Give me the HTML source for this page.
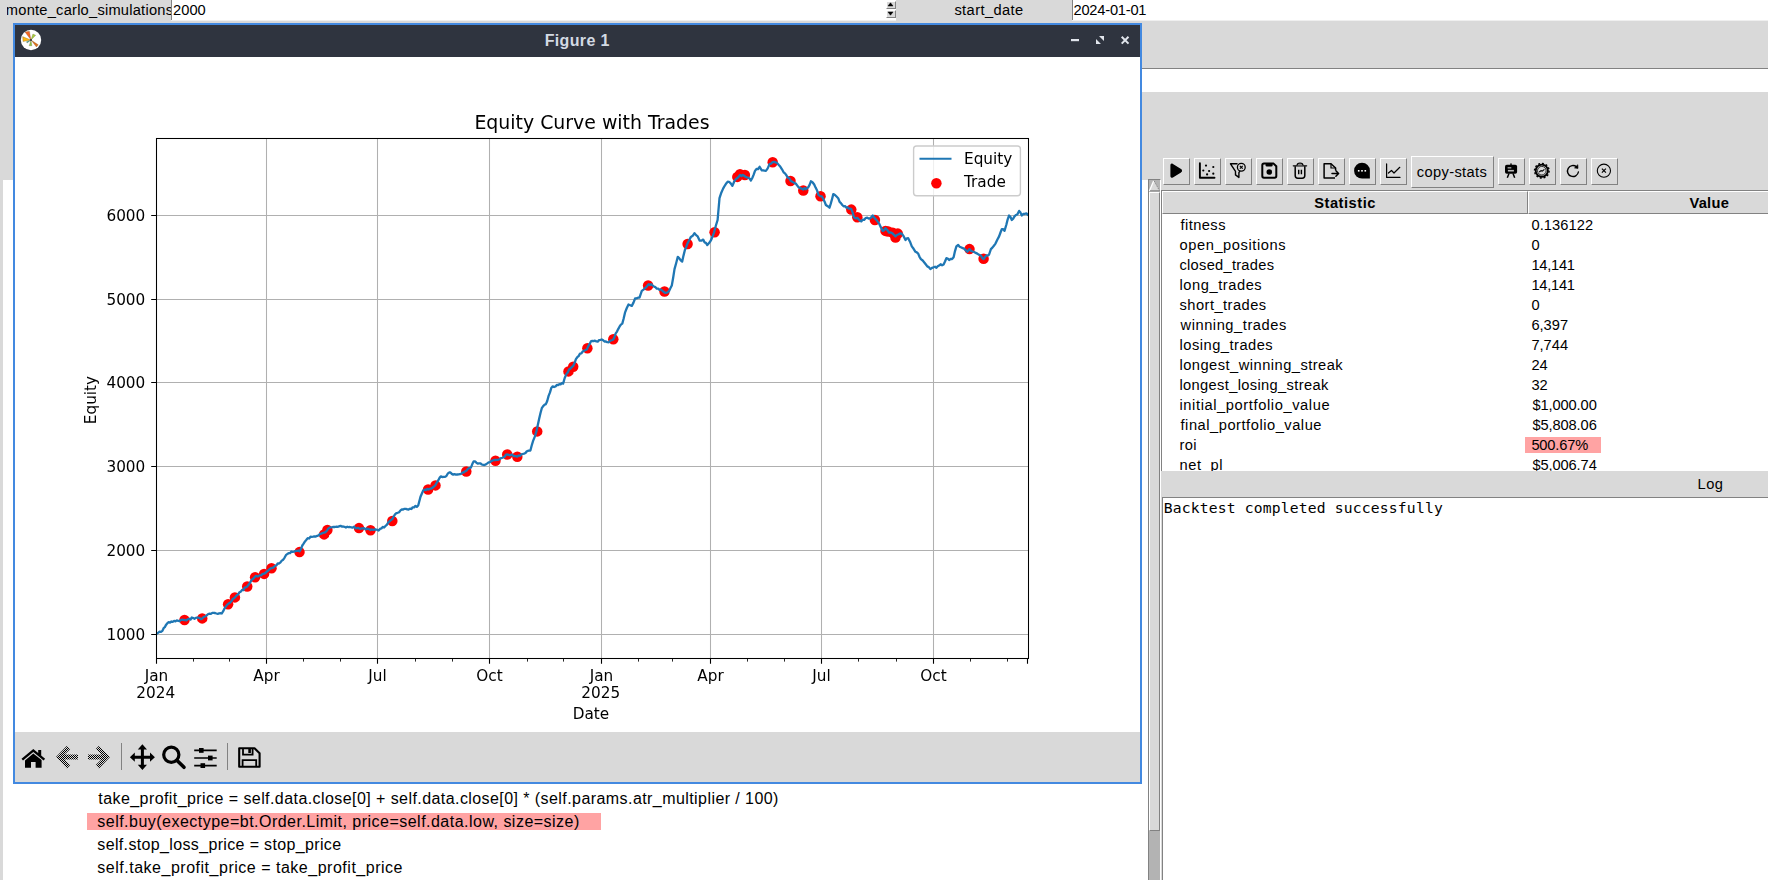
<!DOCTYPE html>
<html><head><meta charset="utf-8"><title>Figure 1</title><style>
*{box-sizing:border-box;margin:0;padding:0}
html,body{width:1768px;height:880px;overflow:hidden;background:#d9d9d9}
body{position:relative;font-family:"Liberation Sans",sans-serif;font-size:13.33px;color:#000}
.a{position:absolute}
.t{position:absolute;white-space:pre;line-height:1}
.ui,.num,.uib{font-family:"Liberation Sans",sans-serif;font-size:14.67px}
.uib{font-weight:bold}
.code{font-family:"Liberation Sans",sans-serif;font-size:16px}
.figt{font-family:"Liberation Sans",sans-serif;font-size:16px;font-weight:bold}
.mono{font-family:"DejaVu Sans Mono",monospace;font-size:14.67px}
.btn{position:absolute;background:#d9d9d9;border:1px solid;border-color:#fff #828282 #828282 #fff;width:27px;height:27px}
.row{position:absolute;left:1180px}
.val{position:absolute;left:1532px}
svg{position:absolute;overflow:visible}
svg text{font-family:"DejaVu Sans",sans-serif}
</style></head><body>
<div class="a" style="left:171px;top:0;width:725px;height:20px;background:#fff;border-left:1px solid #828282"></div>
<div class="a" style="left:171px;top:20px;width:725px;height:1px;background:#efefef"></div>
<div class="a" style="left:7px;top:0;width:164px;height:20px;overflow:hidden"><div class="t ui" style="left:-1.2px;top:2.5px;letter-spacing:0.23px">monte_carlo_simulations:</div></div>
<div class="t num" style="left:173.10px;top:2.60px;letter-spacing:0.0px;">2000</div>
<div class="a" style="left:886px;top:1px;width:10px;height:8px;background:#d9d9d9;border:1px solid;border-color:#fff #828282 #828282 #fff"></div>
<div class="a" style="left:886px;top:10px;width:10px;height:8px;background:#d9d9d9;border:1px solid;border-color:#fff #828282 #828282 #fff"></div>
<svg style="left:886px;top:0" width="10" height="20"><path d="M4.5 2.8 L7 6 L2 6Z M2 12 L7 12 L4.5 15.2Z" fill="#000" stroke="#000" stroke-width="0.5" stroke-linejoin="round"/></svg>
<div class="t ui" style="left:954.40px;top:2.50px;letter-spacing:0.4px;">start_date</div>
<div class="a" style="left:1072px;top:0;width:696px;height:20px;background:#fff;border-left:1px solid #828282"></div>
<div class="a" style="left:1072px;top:20px;width:696px;height:1px;background:#efefef"></div>
<div class="t num" style="left:1073.50px;top:2.50px;letter-spacing:-0.222px;">2024-01-01</div>
<div class="a" style="left:1142px;top:68px;width:626px;height:1px;background:#828282"></div>
<div class="a" style="left:1142px;top:69px;width:626px;height:23px;background:#fff"></div>
<div class="a" style="left:3px;top:180px;width:1145px;height:700px;background:#fff"></div>
<div class="a" style="left:87px;top:813px;width:514px;height:17px;background:#ffa3a3"></div>
<div class="t code" style="left:98.30px;top:790.50px;letter-spacing:0.428px;">take_profit_price = self.data.close[0] + self.data.close[0] * (self.params.atr_multiplier / 100)</div>
<div class="t code" style="left:97.30px;top:813.70px;letter-spacing:0.479px;">self.buy(exectype=bt.Order.Limit, price=self.data.low, size=size)</div>
<div class="t code" style="left:97.30px;top:836.70px;letter-spacing:0.351px;">self.stop_loss_price = stop_price</div>
<div class="t code" style="left:97.30px;top:859.50px;letter-spacing:0.513px;">self.take_profit_price = take_profit_price</div>
<div class="t code" style="left:97.30px;top:766.30px;letter-spacing:0.42px;">stop_price = self.data.close[0] - self.data.close[0] * (self.params.atr_multiplier / 100)</div>
<div class="a" style="left:1148px;top:179px;width:13px;height:701px;background:#b3b3b3;border-left:1px solid #828282;border-right:1px solid #fff;border-top:1px solid #828282"></div>
<div class="a" style="left:1149px;top:192px;width:11px;height:639px;background:#d9d9d9;border:1px solid;border-color:#fff #828282 #828282 #fff"></div>
<svg style="left:1149px;top:180px" width="11" height="12"><path d="M4.8 0.8 L10.6 10.8 L0.3 10.8Z" fill="#d9d9d9"/><path d="M4.6 1 L0.4 11" stroke="#fff" stroke-width="1.3"/><path d="M5.2 1 L10.4 10.6" stroke="#828282" stroke-width="1" stroke-dasharray="1 1"/><path d="M1 10.8 H10.8" stroke="#828282" stroke-width="1"/></svg>
<div class="btn" id="rb0" style="left:1163px;top:158px"></div>
<div class="btn" id="rb1" style="left:1194px;top:158px"></div>
<div class="btn" id="rb2" style="left:1225px;top:158px"></div>
<div class="btn" id="rb3" style="left:1256px;top:158px"></div>
<div class="btn" id="rb4" style="left:1287px;top:158px"></div>
<div class="btn" id="rb5" style="left:1318px;top:158px"></div>
<div class="btn" id="rb6" style="left:1349px;top:158px"></div>
<div class="btn" id="rb7" style="left:1380px;top:158px"></div>
<div class="btn" style="left:1411px;top:156px;width:83px;height:32px"></div>
<div class="t ui" style="left:1416.70px;top:165.00px;letter-spacing:0.378px;">copy-stats</div>
<div class="btn" id="rb8" style="left:1498px;top:158px"></div>
<div class="btn" id="rb9" style="left:1529px;top:158px"></div>
<div class="btn" id="rb10" style="left:1560px;top:158px"></div>
<div class="btn" id="rb11" style="left:1591px;top:158px"></div>
<svg style="left:0;top:0" width="1768" height="200" viewBox="0 0 1768 200">
<g transform="translate(1163,158)"><path d="M8.2 7.4 Q8.2 6 9.5 6.6 L17.6 11.6 Q18.9 12.7 17.6 13.7 L9.5 18.7 Q8.2 19.3 8.2 17.9Z" fill="#000" stroke="#000" stroke-width="1.6" stroke-linejoin="round"/></g>
<g transform="translate(1194,158)"><path d="M5.9 5.2 V19.8 H20.5" fill="none" stroke="#000" stroke-width="1.9" stroke-linecap="round" stroke-linejoin="round"/><g fill="#000"><circle cx="12" cy="7.6" r="1.1"/><circle cx="19.3" cy="9" r="1.1"/><circle cx="9.3" cy="12.5" r="1.1"/><circle cx="15.1" cy="13" r="1.1"/><circle cx="13.1" cy="16.4" r="1.1"/><circle cx="19.3" cy="15.7" r="1.1"/></g></g>
<g transform="translate(1225,158)"><path d="M12 5.8 H5.5 L10.5 13.3 V16.9 L13.9 19.4 V14.6 L14.7 13.3" fill="none" stroke="#000" stroke-width="1.4" stroke-linejoin="round" stroke-linecap="round"/><circle cx="16.3" cy="9.2" r="3.9" fill="none" stroke="#000" stroke-width="1.3"/><path d="M14.9 7.8 L17.7 10.6 M17.7 7.8 L14.9 10.6" stroke="#000" stroke-width="1.2"/></g>
<g transform="translate(1256,158)"><path d="M8 5.6 H17.6 L20.3 8.3 V18 Q20.3 19.7 18.6 19.7 H8 Q6.3 19.7 6.3 18 V7.3 Q6.3 5.6 8 5.6Z" fill="none" stroke="#000" stroke-width="2" stroke-linejoin="round"/><path d="M9.6 5 H16.6 V7.2 Q16.6 8.4 15.4 8.4 H10.8 Q9.6 8.4 9.6 7.2Z" fill="#000"/><circle cx="13.3" cy="14" r="2.8" fill="#000"/></g>
<g transform="translate(1287,158)"><path d="M6.3 7.8 H19.6" stroke="#000" stroke-width="1.3" stroke-linecap="round"/><path d="M10 7.6 Q10 5 13 5 Q16 5 16 7.6" fill="#888" stroke="#000" stroke-width="1.2"/><path d="M8.2 8.2 V17.5 Q8.2 20.2 10.8 20.2 H15.2 Q17.8 20.2 17.8 17.5 V8.2" fill="none" stroke="#000" stroke-width="1.5"/><path d="M11.7 11.8 V16.3 M14.4 11.8 V16.3" stroke="#000" stroke-width="1.4"/></g>
<g transform="translate(1318,158)"><path d="M17 20 H6.1 V5.7 H13 L17.6 10 V12.3" fill="none" stroke="#000" stroke-width="1.5" stroke-linejoin="round"/><path d="M13 5.7 V10 H17.6" fill="none" stroke="#000" stroke-width="1.2"/><path d="M14 15.5 H20.4 M17.9 12.8 L20.6 15.5 L17.9 18.2" fill="none" stroke="#000" stroke-width="1.5" stroke-linecap="round" stroke-linejoin="round"/></g>
<g transform="translate(1349,158)"><path d="M13 4.8 A7.9 7.9 0 1 0 13 20.6 H20.9 V12.7 A7.9 7.9 0 0 0 13 4.8Z" fill="#000"/><g fill="#fff"><rect x="8.9" y="12" width="1.6" height="1.6"/><rect x="12.2" y="12" width="1.6" height="1.6"/><rect x="15.5" y="12" width="1.6" height="1.6"/></g></g>
<g transform="translate(1380,158)"><path d="M6.6 5.9 V19.4 H20" fill="none" stroke="#000" stroke-width="1.2" stroke-linecap="round" stroke-linejoin="round"/><path d="M8.4 15 L11.5 12.5 L14 15 L19.8 9.3" fill="none" stroke="#000" stroke-width="1.2" stroke-linecap="round" stroke-linejoin="round"/></g>
<g transform="translate(1498,158)"><rect x="7" y="6.8" width="12.1" height="9" rx="1.8" fill="#000"/><rect x="12.3" y="5.4" width="1.4" height="2" fill="#000"/><path d="M11 15.5 L9.3 19.8 M15 15.5 L16.7 19.8" stroke="#000" stroke-width="1.5"/><rect x="9.6" y="9.3" width="3.7" height="1.1" fill="#ccc"/><rect x="9.9" y="11.9" width="6" height="1.6" fill="#bbb"/></g>
<g transform="translate(1529,158)"><circle cx="12.8" cy="12.7" r="7.3" fill="none" stroke="#000" stroke-width="1.4" stroke-dasharray="1.9 1.922"/><circle cx="12.8" cy="12.7" r="6.1" fill="none" stroke="#000" stroke-width="1.9"/><circle cx="12.8" cy="12.7" r="4.3" fill="none" stroke="#000" stroke-width="0.8"/><path d="M10.2 14 L12.1 12.6 L13.3 13.1 L15.4 11.4" fill="none" stroke="#000" stroke-width="1.2"/></g>
<g transform="translate(1560,158)"><path d="M18.4 14 A5.5 5.5 0 1 1 16.5 8.8" fill="none" stroke="#000" stroke-width="1.4" stroke-linecap="round"/><path d="M18 10.4 L17.8 6.7 L14.5 9.9Z" fill="#000" stroke="#000" stroke-width="0.6" stroke-linejoin="round"/></g>
<g transform="translate(1591,158)"><circle cx="12.9" cy="12.7" r="6.6" fill="none" stroke="#000" stroke-width="1.1"/><path d="M10.9 10.7 L14.9 14.7 M14.9 10.7 L10.9 14.7" stroke="#000" stroke-width="1.2"/></g>
</svg>
<div class="a" style="left:1161px;top:190px;width:607px;height:281px;background:#fff;border-left:1px solid #828282;border-top:1px solid #828282"></div>
<div class="a" style="left:1162px;top:191px;width:366px;height:23px;background:#d9d9d9;border:1px solid;border-color:#fff #828282 #828282 #fff"></div>
<div class="a" style="left:1528px;top:191px;width:366px;height:23px;background:#d9d9d9;border:1px solid;border-color:#fff #828282 #828282 #fff"></div>
<div class="t uib" style="left:1314.20px;top:195.90px;letter-spacing:0.525px;">Statistic</div>
<div class="t uib" style="left:1689.40px;top:195.80px;letter-spacing:0.3px;">Value</div>
<div class="a" style="left:1525px;top:437px;width:76px;height:16px;background:#ffa3a3"></div>
<div class="a" style="left:1163px;top:214px;width:605px;height:257px;overflow:hidden">
<div class="t ui" style="left:17.50px;top:3.80px;letter-spacing:0.433px;">fitness</div>
<div class="t num" style="left:368.40px;top:3.80px;letter-spacing:0.086px;">0.136122</div>
<div class="t ui" style="left:16.50px;top:23.80px;letter-spacing:0.569px;">open_positions</div>
<div class="t num" style="left:368.40px;top:23.80px;letter-spacing:0.0px;">0</div>
<div class="t ui" style="left:16.50px;top:43.80px;letter-spacing:0.267px;">closed_trades</div>
<div class="t num" style="left:368.40px;top:43.80px;letter-spacing:-0.24px;">14,141</div>
<div class="t ui" style="left:16.50px;top:63.80px;letter-spacing:0.56px;">long_trades</div>
<div class="t num" style="left:368.40px;top:63.80px;letter-spacing:-0.24px;">14,141</div>
<div class="t ui" style="left:16.50px;top:83.80px;letter-spacing:0.473px;">short_trades</div>
<div class="t num" style="left:368.40px;top:83.80px;letter-spacing:0.0px;">0</div>
<div class="t ui" style="left:17.50px;top:103.80px;letter-spacing:0.554px;">winning_trades</div>
<div class="t num" style="left:368.40px;top:103.80px;letter-spacing:0.0px;">6,397</div>
<div class="t ui" style="left:16.50px;top:123.80px;letter-spacing:0.5px;">losing_trades</div>
<div class="t num" style="left:368.40px;top:123.80px;letter-spacing:0.0px;">7,744</div>
<div class="t ui" style="left:16.50px;top:143.80px;letter-spacing:0.476px;">longest_winning_streak</div>
<div class="t num" style="left:368.40px;top:143.80px;letter-spacing:0.0px;">24</div>
<div class="t ui" style="left:16.50px;top:163.80px;letter-spacing:0.35px;">longest_losing_streak</div>
<div class="t num" style="left:368.40px;top:163.80px;letter-spacing:0.0px;">32</div>
<div class="t ui" style="left:16.50px;top:183.80px;letter-spacing:0.6px;">initial_portfolio_value</div>
<div class="t num" style="left:369.40px;top:183.80px;letter-spacing:-0.1px;">$1,000.00</div>
<div class="t ui" style="left:17.50px;top:203.80px;letter-spacing:0.53px;">final_portfolio_value</div>
<div class="t num" style="left:369.40px;top:203.80px;letter-spacing:-0.1px;">$5,808.06</div>
<div class="t ui" style="left:16.50px;top:223.80px;letter-spacing:0.4px;">roi</div>
<div class="t num" style="left:368.40px;top:223.80px;letter-spacing:-0.167px;">500.67%</div>
<div class="t ui" style="left:16.50px;top:243.80px;letter-spacing:0.6px;">net_pl</div>
<div class="t num" style="left:369.40px;top:243.80px;letter-spacing:-0.1px;">$5,006.74</div>
</div>
<div class="a" style="left:1161px;top:471px;width:607px;height:27px;background:#d9d9d9"></div>
<div class="t ui" style="left:1697.60px;top:477.00px;letter-spacing:0.4px;">Log</div>
<div class="a" style="left:1162px;top:497px;width:606px;height:383px;background:#fff;border-left:1px solid #828282;border-top:1px solid #828282"></div>
<div class="t mono" style="left:1163.70px;top:501.00px;letter-spacing:0.183px;">Backtest completed successfully</div>
<div class="a" style="left:13px;top:23px;width:1129px;height:761px;background:#4389e0"></div>
<div class="a" style="left:15px;top:25px;width:1125px;height:32px;background:#2f343f"></div>
<div class="a" style="left:15px;top:57px;width:1125px;height:675px;background:#fff"></div>
<div class="a" style="left:15px;top:732px;width:1125px;height:50px;background:#d9d9d9"></div>
<div class="t figt" style="left:544.70px;top:32.80px;letter-spacing:0.343px;color:#d3dae3">Figure 1</div>
<svg style="left:1060px;top:25px" width="80" height="32"><rect x="11" y="14" width="8" height="2.2" fill="#e1e5ec"/><path d="M39 11 H44 V16Z M36 14 V19 H41Z" fill="#e1e5ec"/><path d="M61.7 11.8 L68.5 18.6 M68.5 11.8 L61.7 18.6" stroke="#e1e5ec" stroke-width="2" fill="none"/></svg>
<svg style="left:20px;top:29px" width="22" height="22" viewBox="0 0 22 22"><circle cx="11" cy="11" r="10.2" fill="#fff"/><g stroke="#5a4a2a" stroke-width="0.25"><path d="M11 11 L5 3 L9.4 2.2Z" fill="#f26522"/><path d="M11 11 L2.6 7.6 L3 12.6Z" fill="#fbb615"/><path d="M11 11 L12.9 5 L15.7 6.3Z" fill="#a6ce39"/><path d="M11 11 L18.3 15.8 L16.4 18Z" fill="#e0701c"/><path d="M11 11 L9.2 16.7 L11.9 16.7Z" fill="#8dc63f"/><path d="M11 11 L6.4 12.8 L7.2 14Z" fill="#3aa99f"/></g><circle cx="11" cy="11" r="1" fill="#333"/></svg>
<svg style="left:0;top:0;will-change:transform" width="1768" height="880" viewBox="0 0 1768 880">
<defs><clipPath id="axclip"><rect x="156.5" y="138.5" width="872.0" height="520.0"/></clipPath></defs>
<path d="M156.5 138.5 V658.5 M266.5 138.5 V658.5 M377.5 138.5 V658.5 M489.5 138.5 V658.5 M601.5 138.5 V658.5 M710.5 138.5 V658.5 M821.5 138.5 V658.5 M933.5 138.5 V658.5 M156.5 634.5 H1028.5 M156.5 550.5 H1028.5 M156.5 466.5 H1028.5 M156.5 382.5 H1028.5 M156.5 299.5 H1028.5 M156.5 215.5 H1028.5" stroke="#b0b0b0" stroke-width="1.05" fill="none"/>
<circle cx="184.5" cy="620.0" r="5.25" fill="#ff0000"/>
<circle cx="202.2" cy="618.4" r="5.25" fill="#ff0000"/>
<circle cx="228.1" cy="604.2" r="5.25" fill="#ff0000"/>
<circle cx="234.9" cy="597.4" r="5.25" fill="#ff0000"/>
<circle cx="247.2" cy="586.5" r="5.25" fill="#ff0000"/>
<circle cx="255.1" cy="577.2" r="5.25" fill="#ff0000"/>
<circle cx="264.1" cy="573.9" r="5.25" fill="#ff0000"/>
<circle cx="271.5" cy="568.2" r="5.25" fill="#ff0000"/>
<circle cx="299.5" cy="552.1" r="5.25" fill="#ff0000"/>
<circle cx="324.1" cy="534.4" r="5.25" fill="#ff0000"/>
<circle cx="327.4" cy="530.0" r="5.25" fill="#ff0000"/>
<circle cx="359.0" cy="528.1" r="5.25" fill="#ff0000"/>
<circle cx="370.5" cy="530.3" r="5.25" fill="#ff0000"/>
<circle cx="392.3" cy="521.0" r="5.25" fill="#ff0000"/>
<circle cx="428.1" cy="489.5" r="5.25" fill="#ff0000"/>
<circle cx="435.5" cy="485.4" r="5.25" fill="#ff0000"/>
<circle cx="466.3" cy="471.5" r="5.25" fill="#ff0000"/>
<circle cx="495.5" cy="460.8" r="5.25" fill="#ff0000"/>
<circle cx="507.2" cy="454.5" r="5.25" fill="#ff0000"/>
<circle cx="517.3" cy="456.7" r="5.25" fill="#ff0000"/>
<circle cx="537.2" cy="431.4" r="5.25" fill="#ff0000"/>
<circle cx="568.5" cy="371.4" r="5.25" fill="#ff0000"/>
<circle cx="573.2" cy="366.7" r="5.25" fill="#ff0000"/>
<circle cx="587.4" cy="348.2" r="5.25" fill="#ff0000"/>
<circle cx="613.3" cy="339.2" r="5.25" fill="#ff0000"/>
<circle cx="648.1" cy="285.5" r="5.25" fill="#ff0000"/>
<circle cx="664.5" cy="291.5" r="5.25" fill="#ff0000"/>
<circle cx="687.6" cy="244.0" r="5.25" fill="#ff0000"/>
<circle cx="714.6" cy="232.3" r="5.25" fill="#ff0000"/>
<circle cx="737.3" cy="176.9" r="5.25" fill="#ff0000"/>
<circle cx="740.0" cy="174.2" r="5.25" fill="#ff0000"/>
<circle cx="744.9" cy="175.0" r="5.25" fill="#ff0000"/>
<circle cx="772.7" cy="162.2" r="5.25" fill="#ff0000"/>
<circle cx="790.5" cy="181.0" r="5.25" fill="#ff0000"/>
<circle cx="803.3" cy="190.5" r="5.25" fill="#ff0000"/>
<circle cx="820.5" cy="196.3" r="5.25" fill="#ff0000"/>
<circle cx="851.3" cy="209.6" r="5.25" fill="#ff0000"/>
<circle cx="857.3" cy="217.3" r="5.25" fill="#ff0000"/>
<circle cx="874.9" cy="220.0" r="5.25" fill="#ff0000"/>
<circle cx="885.5" cy="230.9" r="5.25" fill="#ff0000"/>
<circle cx="888.2" cy="231.5" r="5.25" fill="#ff0000"/>
<circle cx="892.7" cy="232.7" r="5.25" fill="#ff0000"/>
<circle cx="895.5" cy="237.6" r="5.25" fill="#ff0000"/>
<circle cx="897.8" cy="233.6" r="5.25" fill="#ff0000"/>
<circle cx="969.5" cy="249.1" r="5.25" fill="#ff0000"/>
<circle cx="983.6" cy="258.7" r="5.25" fill="#ff0000"/>
<polyline clip-path="url(#axclip)" points="156.9,633.6 158.3,632.6 159.6,631.6 161.0,631.9 162.4,630.9 163.6,628.2 164.8,627.2 166.0,624.9 167.3,623.3 168.6,622.2 170.0,622.6 171.4,621.5 172.7,621.9 174.1,620.9 175.5,621.4 176.8,620.4 178.2,620.8 179.5,621.3 180.9,619.8 182.3,619.7 183.6,620.0 185.0,620.0 186.4,620.3 187.7,619.3 189.1,618.7 190.5,619.5 191.8,617.5 193.2,618.1 194.5,618.8 195.8,617.9 197.0,617.7 198.3,617.7 199.6,618.1 200.9,619.1 202.2,618.6 203.7,616.9 205.2,616.5 206.7,615.4 208.2,614.0 209.5,613.7 210.9,613.9 212.3,612.9 213.6,612.8 215.0,613.0 216.4,613.5 217.7,613.8 219.1,613.3 220.5,613.1 221.8,613.5 223.2,611.2 224.5,608.6 225.9,606.4 227.3,604.6 228.6,603.6 230.0,602.8 231.4,601.3 232.7,599.1 234.1,598.3 235.5,596.8 236.8,595.3 238.2,594.4 239.5,592.2 240.8,591.6 242.1,589.9 243.4,590.2 244.6,587.7 245.9,587.3 247.2,586.5 248.8,584.6 250.5,581.8 251.8,579.6 253.2,578.7 254.5,577.2 255.9,575.8 257.3,576.5 258.6,576.1 260.0,575.3 261.4,575.3 262.7,573.8 264.1,573.6 265.5,572.9 266.8,571.6 268.2,570.5 269.5,569.2 270.9,568.2 272.3,568.0 273.6,567.4 275.0,565.8 276.4,565.4 277.7,563.5 279.1,563.5 280.5,562.3 281.8,560.6 283.2,559.7 284.5,557.8 285.9,555.2 287.3,554.0 288.6,553.2 290.0,553.2 291.4,551.5 292.7,551.8 294.1,551.6 295.5,551.0 296.8,550.8 298.2,550.6 299.5,551.3 300.9,549.2 302.3,545.5 303.6,543.6 305.0,541.4 306.4,539.8 307.7,538.2 309.1,538.5 310.5,536.7 311.8,536.9 313.2,536.7 314.5,536.3 315.9,536.5 317.3,535.8 318.6,535.4 320.0,533.8 321.4,533.6 322.7,533.0 324.1,532.7 325.5,532.1 326.8,530.8 328.2,528.6 329.5,527.7 330.9,527.4 332.3,527.2 333.6,526.9 335.0,527.0 336.4,526.7 337.7,526.9 339.1,526.3 340.5,525.8 341.8,526.6 343.2,526.5 344.5,526.8 345.9,527.5 347.3,526.7 348.6,527.2 350.0,527.0 351.4,527.3 352.7,527.6 354.1,526.6 355.5,528.3 356.8,528.2 358.2,527.8 359.4,528.7 360.6,528.8 361.9,528.3 363.1,528.5 364.3,528.2 365.5,529.4 366.8,528.6 368.0,528.8 369.2,529.3 370.5,530.0 371.8,529.5 373.2,529.9 374.5,529.5 375.9,529.5 377.3,529.8 378.6,530.5 380.0,528.9 381.4,528.4 382.7,526.9 384.1,527.5 385.5,525.9 386.8,524.8 388.2,522.5 389.5,521.4 390.9,520.2 392.3,519.1 393.6,516.8 395.0,514.4 396.4,513.1 397.7,512.8 399.1,512.2 400.5,510.4 401.8,509.5 403.2,509.5 404.5,508.8 405.9,508.8 407.3,509.3 408.6,509.5 410.0,508.6 411.4,509.0 412.7,507.3 414.1,507.4 415.5,505.9 416.8,506.9 418.2,505.5 420.5,496.8 421.8,493.7 423.2,490.5 424.5,489.6 425.9,490.1 427.3,488.9 428.6,489.5 430.0,488.6 431.4,488.6 432.7,487.5 434.1,486.3 435.5,485.1 436.8,482.5 438.2,480.5 439.5,477.9 440.9,476.4 442.3,477.0 443.6,476.8 445.0,476.9 446.4,476.0 447.7,473.7 449.1,472.5 450.5,472.5 451.8,473.9 453.2,474.6 454.5,474.2 455.9,474.7 457.3,474.5 458.6,474.4 460.0,474.2 461.4,473.6 462.6,472.5 463.8,472.3 465.0,471.3 466.3,470.9 467.8,469.0 469.4,467.9 470.9,467.6 472.3,464.1 473.6,461.4 475.0,461.4 476.4,462.7 477.7,463.6 479.1,463.3 480.5,463.4 481.8,464.5 483.2,464.8 484.5,465.0 485.9,464.4 487.3,463.4 488.6,462.4 490.0,462.2 491.4,461.1 492.7,460.5 494.1,460.0 495.5,460.0 496.8,459.8 498.2,459.8 499.5,459.3 500.9,458.2 502.3,457.8 503.5,457.3 504.7,456.7 506.0,454.6 507.2,454.5 508.7,454.8 510.3,455.3 511.8,454.5 513.2,455.6 514.5,456.1 515.9,456.1 517.3,456.7 518.6,455.5 520.0,455.9 521.4,454.4 522.7,454.0 524.1,453.6 525.5,453.0 526.8,451.3 528.6,450.7 530.4,450.5 531.7,445.5 533.1,440.9 534.7,436.9 536.4,431.4 537.7,425.6 539.1,419.1 540.5,413.0 541.8,408.2 543.2,406.1 544.5,404.8 545.9,404.1 547.3,400.7 548.6,395.9 550.0,392.4 551.4,387.7 552.7,386.4 554.1,387.0 555.5,386.5 556.8,385.0 558.1,385.0 559.3,384.2 560.6,384.3 561.8,383.2 563.1,383.6 564.7,378.0 566.4,374.1 567.7,372.6 569.1,369.5 570.5,368.5 571.8,367.1 573.2,365.9 574.5,363.3 575.9,359.1 577.3,357.2 578.6,356.1 580.0,353.6 581.4,353.4 582.7,351.5 584.1,350.7 585.5,350.0 586.8,349.5 588.2,346.4 589.5,344.2 590.9,341.4 592.3,340.9 593.6,341.2 595.0,340.7 596.4,341.4 597.7,341.6 599.1,340.1 600.5,339.9 601.8,339.5 603.2,340.3 604.5,341.5 605.9,341.4 607.3,342.2 608.8,342.3 610.3,340.8 611.8,340.2 613.3,339.5 614.5,336.9 615.7,333.4 617.0,331.6 618.2,329.1 619.5,326.7 620.9,324.6 622.3,323.6 623.6,318.7 625.0,312.7 626.8,308.0 628.5,304.5 630.2,305.2 631.8,305.9 633.5,302.6 635.1,298.5 636.5,298.4 638.0,297.7 639.5,297.7 641.8,290.9 643.5,289.6 645.1,288.2 646.9,286.2 648.6,284.1 650.0,285.1 651.4,284.3 652.7,285.5 654.1,286.7 655.5,287.2 656.8,288.7 658.2,288.6 659.5,289.8 660.9,289.5 662.3,290.7 663.6,291.8 665.0,292.8 666.4,292.6 667.7,292.3 669.1,290.9 670.5,288.1 671.8,285.5 673.2,277.5 674.5,269.1 676.2,263.0 677.8,256.8 679.3,258.4 680.7,260.3 682.2,261.5 683.5,255.6 684.9,250.0 686.3,246.7 687.6,243.2 689.3,240.0 690.9,236.9 692.7,235.8 694.5,233.1 696.1,235.1 697.7,236.4 699.6,240.5 701.4,240.7 703.2,239.6 704.5,242.3 705.9,242.8 707.3,245.1 708.6,243.6 710.0,241.8 711.4,239.4 712.7,236.1 714.1,232.3 715.9,225.5 717.6,220.0 719.5,198.2 721.3,192.7 723.1,188.6 724.7,185.8 726.4,183.2 727.7,181.7 729.1,181.8 730.7,183.4 732.4,185.9 734.1,181.7 735.9,179.1 737.3,178.0 738.6,176.9 740.0,175.0 741.4,176.0 742.7,174.9 744.1,175.8 745.5,176.8 746.8,177.4 748.2,177.7 749.5,178.4 750.9,180.5 752.3,178.0 753.6,174.9 755.0,170.9 756.5,169.0 758.1,169.0 759.6,166.8 761.8,170.4 763.2,170.4 764.5,170.7 765.9,170.9 767.7,168.4 769.5,164.1 771.1,163.7 772.7,162.2 774.1,161.8 775.5,162.4 776.8,162.7 778.6,164.8 780.4,166.8 782.0,169.3 783.6,172.3 785.0,173.4 786.4,175.2 787.7,177.6 789.1,178.0 790.5,180.5 791.8,181.5 793.2,182.2 794.5,183.2 795.9,183.7 797.3,185.6 798.6,187.3 800.2,188.2 801.7,188.7 803.3,189.5 804.5,188.1 805.7,189.2 807.0,188.3 808.2,187.3 809.5,185.1 810.9,181.3 812.5,182.2 814.2,184.5 815.6,187.6 817.1,190.6 818.5,194.9 820.2,196.1 821.8,196.3 823.2,198.8 824.5,201.4 825.9,205.0 827.7,206.2 829.5,207.7 830.7,203.9 832.0,199.2 833.3,194.1 835.0,195.0 836.8,196.8 838.2,198.2 839.5,201.7 840.9,203.1 842.3,205.0 843.6,206.3 845.0,206.1 846.4,207.7 847.6,207.3 848.8,208.7 850.0,208.6 851.3,209.1 852.6,212.4 854.0,217.3 855.6,218.3 857.3,217.8 858.6,219.2 860.0,220.7 861.4,221.4 862.7,219.6 864.1,219.9 865.5,218.2 867.3,217.7 869.1,218.7 870.9,217.7 872.7,215.5 874.1,217.2 875.5,219.1 877.3,221.1 879.1,223.6 880.9,227.4 882.7,230.9 884.1,230.3 885.5,228.2 887.3,230.0 889.1,232.7 890.9,232.5 892.7,233.6 894.1,235.0 895.5,236.4 896.8,235.0 898.2,234.5 900.0,233.4 901.8,233.6 903.6,236.2 905.5,240.0 906.8,238.3 908.2,238.2 910.0,241.7 911.8,246.4 913.6,248.8 915.5,251.8 916.8,252.4 918.2,253.6 919.5,256.8 920.9,259.1 922.7,260.5 924.5,262.7 925.9,264.5 927.3,266.4 928.8,267.1 930.4,269.1 932.0,267.9 933.6,267.3 935.0,266.7 936.4,267.8 937.7,266.2 939.1,265.5 940.6,264.3 942.1,265.3 943.6,264.5 945.0,261.5 946.4,258.2 947.7,258.5 949.1,260.0 950.6,259.0 952.1,259.0 953.6,257.3 955.0,251.1 956.4,246.4 958.2,244.9 959.5,246.7 960.9,247.3 962.7,248.1 964.5,249.1 965.9,250.4 967.3,251.8 969.5,249.1 971.1,250.9 972.7,251.5 974.2,252.0 975.8,252.9 977.3,253.6 979.1,254.9 980.9,255.5 982.3,258.1 983.6,259.1 985.0,257.0 986.4,255.5 987.7,255.6 989.1,254.5 990.9,249.1 992.4,247.6 993.9,245.7 995.5,243.6 997.3,239.8 999.1,236.4 1000.5,232.5 1001.8,229.1 1003.2,229.2 1004.5,230.9 1006.4,224.5 1007.7,219.3 1009.1,215.5 1010.5,217.0 1011.8,220.0 1013.2,218.6 1014.5,216.4 1015.9,215.0 1017.3,214.5 1019.1,210.9 1020.5,212.6 1021.8,215.5 1023.2,214.0 1024.5,214.0 1026.4,213.3 1027.6,214.5" fill="none" stroke="#1f77b4" stroke-width="2.3" stroke-linejoin="round" stroke-linecap="square"/>
<rect x="156.5" y="138.5" width="872.0" height="520.0" fill="none" stroke="#000" stroke-width="1.05"/>
<path d="M156.5 658.5 v5.3 M266.5 658.5 v5.3 M377.5 658.5 v5.3 M489.5 658.5 v5.3 M601.5 658.5 v5.3 M710.5 658.5 v5.3 M821.5 658.5 v5.3 M933.5 658.5 v5.3 M1027.5 658.5 v5.3 M156.5 634.5 h-5.3 M156.5 550.5 h-5.3 M156.5 466.5 h-5.3 M156.5 382.5 h-5.3 M156.5 299.5 h-5.3 M156.5 215.5 h-5.3" stroke="#000" stroke-width="1.1" fill="none"/>
<path d="M193.5 658.5 v3.1 M229.5 658.5 v3.1 M303.5 658.5 v3.1 M340.5 658.5 v3.1 M415.5 658.5 v3.1 M452.5 658.5 v3.1 M527.5 658.5 v3.1 M563.5 658.5 v3.1 M638.5 658.5 v3.1 M672.5 658.5 v3.1 M747.5 658.5 v3.1 M784.5 658.5 v3.1 M858.5 658.5 v3.1 M896.5 658.5 v3.1 M970.5 658.5 v3.1 M1007.5 658.5 v3.1" stroke="#000" stroke-width="0.85" fill="none"/>
<text x="156.5" y="680.5" font-size="15.28" text-anchor="middle">Jan</text>
<text x="155.7" y="697.8" font-size="15.28" text-anchor="middle">2024</text>
<text x="266.5" y="680.5" font-size="15.28" text-anchor="middle">Apr</text>
<text x="377.5" y="680.5" font-size="15.28" text-anchor="middle">Jul</text>
<text x="489.5" y="680.5" font-size="15.28" text-anchor="middle">Oct</text>
<text x="601.5" y="680.5" font-size="15.28" text-anchor="middle">Jan</text>
<text x="600.7" y="697.8" font-size="15.28" text-anchor="middle">2025</text>
<text x="710.5" y="680.5" font-size="15.28" text-anchor="middle">Apr</text>
<text x="821.5" y="680.5" font-size="15.28" text-anchor="middle">Jul</text>
<text x="933.5" y="680.5" font-size="15.28" text-anchor="middle">Oct</text>
<text x="145.3" y="640.3" font-size="15.28" text-anchor="end">1000</text>
<text x="145.3" y="556.3" font-size="15.28" text-anchor="end">2000</text>
<text x="145.3" y="472.3" font-size="15.28" text-anchor="end">3000</text>
<text x="145.3" y="388.3" font-size="15.28" text-anchor="end">4000</text>
<text x="145.3" y="305.3" font-size="15.28" text-anchor="end">5000</text>
<text x="145.3" y="221.3" font-size="15.28" text-anchor="end">6000</text>
<text x="591" y="718.5" font-size="15.28" text-anchor="middle">Date</text>
<text transform="translate(95.5,400) rotate(-90)" font-size="15.28" text-anchor="middle">Equity</text>
<text x="592" y="128.6" font-size="18.9" text-anchor="middle">Equity Curve with Trades</text>
<rect x="913.6" y="146" width="106.8" height="49.8" rx="3" fill="#fff" fill-opacity="0.8" stroke="#cccccc" stroke-width="1.4"/>
<path d="M919.5 158.7 H951.5" stroke="#1f77b4" stroke-width="2.1"/>
<circle cx="936.4" cy="183.3" r="5.25" fill="#ff0000"/>
<text x="964" y="163.5" font-size="15.28">Equity</text>
<text x="964" y="186.5" font-size="15.28">Trade</text>
</svg>
<svg style="left:0;top:0" width="300" height="880" viewBox="0 0 300 880">
<path d="M121.5 743 V770 M227.5 743 V770" stroke="#828282" stroke-width="1"/>
<g fill="#000"><path d="M33.3 749 L21.5 758.8 L23 760.5 L33.3 752 L43.6 760.5 L45.1 758.8 L41.2 755.5 V750 H38.2 V753 Z"/><path d="M33.3 753.6 L25 760.4 V767.8 H31 V762 H35.6 V767.8 H41.6 V760Z"/></g>
<defs><pattern id="stp" width="2" height="2" patternUnits="userSpaceOnUse"><rect width="2" height="2" fill="#d9d9d9"/><rect width="1" height="1" fill="#000"/><rect x="1" y="1" width="1" height="1" fill="#000"/></pattern></defs>
<path d="M56 757 L67 745.7 L70.2 749 L64.6 754.6 H78 V759.4 H64.6 L70.2 765 L67 768.4Z" fill="url(#stp)"/>
<path d="M110 757 L99 745.7 L95.8 749 L101.4 754.6 H88 V759.4 H101.4 L95.8 765 L99 768.4Z" fill="url(#stp)"/>
<path d="M142.4 744.3 L147 749.6 H143.9 V755.7 H150 V752.6 L154.9 757.2 L150 761.8 V758.7 H143.9 V764.8 H147 L142.4 770.1 L137.8 764.8 H140.9 V758.7 H134.8 V761.8 L129.9 757.2 L134.8 752.6 V755.7 H140.9 V749.6 H137.8Z" fill="#000"/>
<circle cx="171.3" cy="754.8" r="7.6" fill="none" stroke="#000" stroke-width="3.2"/><path d="M176.8 760.3 L184 767.3" stroke="#000" stroke-width="3.6" stroke-linecap="round"/>
<g stroke="#000" stroke-width="1.6"><path d="M194.2 750.4 H216.7 M194.2 758 H216.7 M194.2 765.6 H216.7"/></g><g fill="#000"><rect x="199" y="748" width="4.6" height="4.8"/><rect x="208" y="755.6" width="4.6" height="4.8"/><rect x="200.5" y="763.2" width="4.6" height="4.8"/></g>
<path d="M239.2 748.2 H254.5 L259.6 753.3 V766.8 H239.2Z" fill="none" stroke="#000" stroke-width="2.1" stroke-linejoin="round"/><path d="M243 748.2 V754.6 H252.6 V748.2" fill="none" stroke="#000" stroke-width="1.8"/><rect x="248.3" y="748.8" width="2.6" height="4.2" fill="#000"/><path d="M242.6 766.8 V760.2 H256.2 V766.8" fill="none" stroke="#000" stroke-width="1.8"/>
</svg>
</body></html>
